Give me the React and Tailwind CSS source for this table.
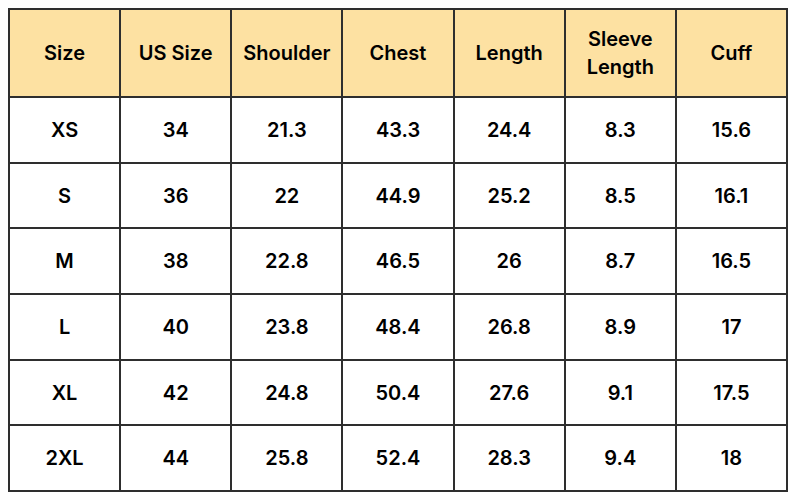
import React from "react";

const headers = ["Size", "US Size", "Shoulder", "Chest", "Length", "Sleeve|Length", "Cuff"];
const rows = [
  ["XS", "34", "21.3", "43.3", "24.4", "8.3", "15.6"],
  ["S", "36", "22", "44.9", "25.2", "8.5", "16.1"],
  ["M", "38", "22.8", "46.5", "26", "8.7", "16.5"],
  ["L", "40", "23.8", "48.4", "26.8", "8.9", "17"],
  ["XL", "42", "24.8", "50.4", "27.6", "9.1", "17.5"],
  ["2XL", "44", "25.8", "52.4", "28.3", "9.4", "18"],
];

export default function App() {
  return (
    <div className="w-[800px] h-[500px] bg-white p-2" style={{ fontFamily: "Inter, 'Open Sans', sans-serif" }}>
      <table className="w-[780px] h-[484px] table-fixed border-collapse text-black">
        <thead>
          <tr className="h-[88px] bg-[#fde1a2]">
            {headers.map((h) => (
              <th key={h} className="border-2 border-[#2e2e2e] px-0 text-[20px] font-semibold leading-[28px] text-center whitespace-nowrap">
                {h.split("|").map((p, i) => (
                  <div key={i}>{p}</div>
                ))}
              </th>
            ))}
          </tr>
        </thead>
        <tbody>
          {rows.map((r) => (
            <tr key={r[0]} className="h-[65.7px]">
              {r.map((c, i) => (
                <td key={i} className="border-2 border-[#2e2e2e] text-[20px] font-semibold text-center">
                  {c}
                </td>
              ))}
            </tr>
          ))}
        </tbody>
      </table>
    </div>
  );
}
